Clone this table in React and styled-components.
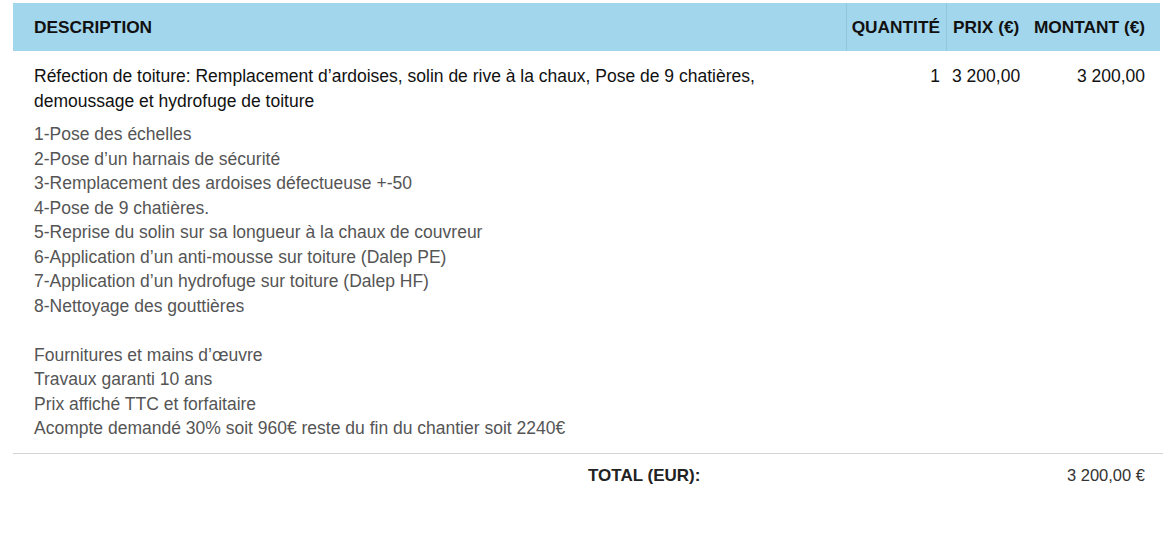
import React from "react";
import styled, { createGlobalStyle } from "styled-components";

const Global = createGlobalStyle`
  html, body { margin: 0; padding: 0; background: #fff; }
  body { font-family: "Liberation Sans", Arial, sans-serif; color: #1a1a1a; }
`;

const Wrap = styled.div`
  padding: 3px 13px 0 13px;
`;

const cols = "833px 100px 79px 1fr";

const HeadRow = styled.div`
  display: grid;
  grid-template-columns: ${cols};
  background: #a2d6ec;
  height: 48px;
  align-items: stretch;
`;

const HeadCell = styled.div`
  display: flex;
  align-items: center;
  justify-content: ${(p) => (p.$align === "right" ? "flex-end" : "flex-start")};
  padding: 0 ${(p) => p.$pr || 6}px 0 ${(p) => p.$pl || 6}px;
  font-weight: bold;
  font-size: 17.3px;
  color: #111;
  border-left: ${(p) => (p.$divider ? "1px solid #8fc7df" : "none")};
  white-space: nowrap;
`;

const BodyRow = styled.div`
  display: grid;
  grid-template-columns: ${cols};
  padding-top: 13px;
`;

const Cell = styled.div`
  font-size: 17.5px;
  line-height: 25px;
  color: #111;
  text-align: ${(p) => p.$align || "left"};
  padding: 0 ${(p) => p.$pr || 6}px 0 ${(p) => p.$pl || 6}px;
  white-space: ${(p) => (p.$nowrap ? "nowrap" : "normal")};
`;

const Title = styled.div`
  max-width: 780px;
  margin-bottom: 8px;
`;

const Details = styled.div`
  color: #555;
  line-height: 24.5px;
`;

const Line = styled.div`
  min-height: 24.5px;
`;

const Rule = styled.div`
  margin-top: 12px;
  height: 1px;
  border-top: 1px solid #d4d4d4;
  margin-right: -3px;
`;

const TotalRow = styled.div`
  display: grid;
  grid-template-columns: 575px 135px 1fr;
  align-items: center;
  height: 42px;
  font-size: 17px;
`;

const TotalLabel = styled.div`
  font-weight: bold;
  color: #222;
  white-space: nowrap;
`;

const TotalValue = styled.div`
  text-align: right;
  padding-right: 15px;
  font-size: 16.5px;
  color: #333;
`;

const details = [
  "1-Pose des échelles",
  "2-Pose d’un harnais de sécurité",
  "3-Remplacement des ardoises défectueuse +-50",
  "4-Pose de 9 chatières.",
  "5-Reprise du solin sur sa longueur à la chaux de couvreur",
  "6-Application d’un anti-mousse sur toiture (Dalep PE)",
  "7-Application d’un hydrofuge sur toiture (Dalep HF)",
  "8-Nettoyage des gouttières",
  "",
  "Fournitures et mains d’œuvre",
  "Travaux garanti 10 ans",
  "Prix affiché TTC et forfaitaire",
  "Acompte demandé 30% soit 960€ reste du fin du chantier soit 2240€",
];

export default function App() {
  return (
    <>
      <Global />
      <Wrap>
        <HeadRow>
          <HeadCell $pl={21}>DESCRIPTION</HeadCell>
          <HeadCell $divider $align="right">QUANTITÉ</HeadCell>
          <HeadCell $divider>PRIX (€)</HeadCell>
          <HeadCell $align="right" $pr={15}>MONTANT (€)</HeadCell>
        </HeadRow>
        <BodyRow>
          <Cell $pl={21}>
            <Title>
              Réfection de toiture: Remplacement d’ardoises, solin de rive à la chaux, Pose de 9 chatières, demoussage et hydrofuge de toiture
            </Title>
            <Details>
              {details.map((d, i) => (
                <Line key={i}>{d}</Line>
              ))}
            </Details>
          </Cell>
          <Cell $align="right" $nowrap>1</Cell>
          <Cell $nowrap>3 200,00</Cell>
          <Cell $align="right" $pr={15} $nowrap>3 200,00</Cell>
        </BodyRow>
        <Rule />
        <TotalRow>
          <div />
          <TotalLabel>TOTAL (EUR):</TotalLabel>
          <TotalValue>3 200,00 €</TotalValue>
        </TotalRow>
      </Wrap>
    </>
  );
}
